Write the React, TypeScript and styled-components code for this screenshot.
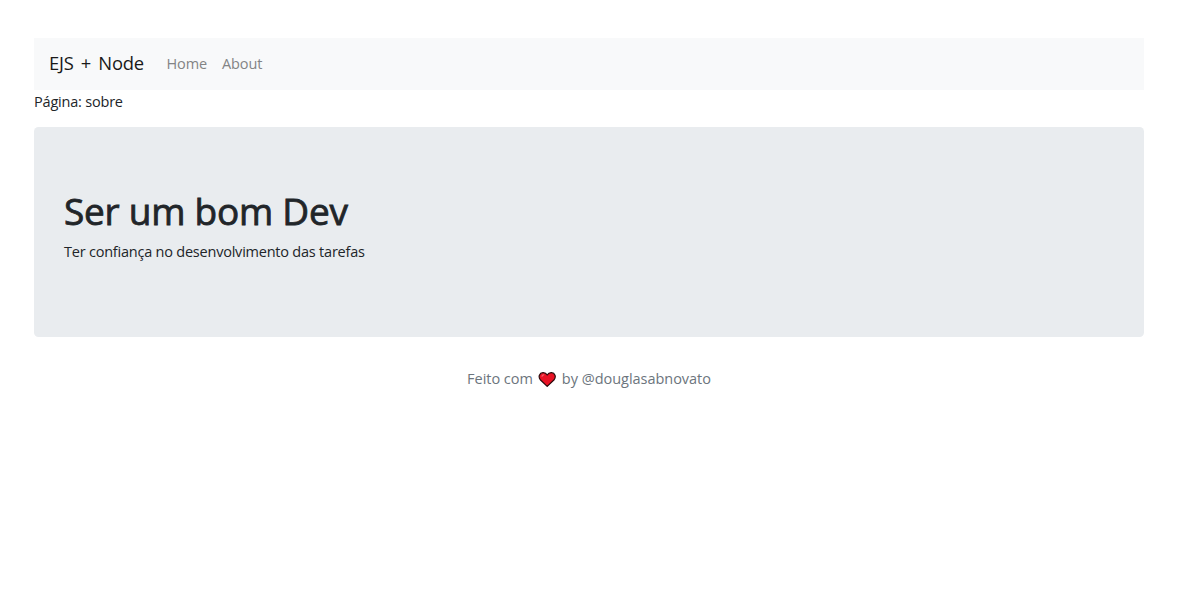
import React from "react";
import styled, { createGlobalStyle } from "styled-components";

const GlobalStyle = createGlobalStyle`
  *, *::before, *::after { box-sizing: border-box; }
  body {
    margin: 0;
    background: #fff;
    color: #212529;
    font-family: "Open Sans", "Noto Sans", sans-serif;
    font-size: 14.5px;
    font-weight: 400;
    line-height: 22.5px;
    letter-spacing: -0.22px;
  }
`;

const Page = styled.div`
  padding: 38px 54px 0 34px;
`;

const Navbar = styled.nav`
  display: flex;
  align-items: center;
  height: 52px;
  padding: 0 15px;
  background: #f8f9fa;
`;

const Brand = styled.a`
  width: 95px;
  margin-right: 22.5px;
  padding-bottom: 2px;
  color: #191919;
  font-size: 18.4px;
  letter-spacing: -0.2px;
  word-spacing: 2.6px;
  white-space: nowrap;
`;

const NavLinks = styled.div`
  display: flex;
  gap: 15px;
  color: #838485;
`;

const NavLink = styled.a<{ $width: number }>`
  width: ${(p) => p.$width}px;
  letter-spacing: -0.1px;
  white-space: nowrap;
`;

const PageLabel = styled.div`
  height: 37px;
  padding-top: 1px;
  letter-spacing: -0.2px;
`;

const Jumbotron = styled.section`
  height: 210px;
  padding: 61px 30px 60px;
  border-radius: 4.5px;
  background: #e9ecef;
`;

const Title = styled.h1`
  margin: 0 0 8px;
  font-size: 37px;
  font-weight: 400;
  line-height: 45px;
  letter-spacing: -0.25px;
  -webkit-text-stroke: 0.8px currentColor;
`;

const Lead = styled.p`
  margin: 0;
`;

const Footer = styled.footer`
  display: flex;
  align-items: center;
  justify-content: center;
  margin-top: 31px;
  color: #6c757d;
  letter-spacing: -0.03px;
`;

const Heart = styled.svg`
  margin: 0 5px;
`;

export default function App() {
  return (
    <>
      <GlobalStyle />
      <Page>
        <Navbar>
          <Brand>EJS + Node</Brand>
          <NavLinks>
            <NavLink $width={40.5}>Home</NavLink>
            <NavLink $width={41}>About</NavLink>
          </NavLinks>
        </Navbar>
        <PageLabel>Página: sobre</PageLabel>
        <Jumbotron>
          <Title>Ser um bom Dev</Title>
          <Lead>Ter confiança no desenvolvimento das tarefas</Lead>
        </Jumbotron>
        <Footer>
          <span>Feito com</span>
          <Heart width="19" height="17" viewBox="0 0 19 17">
            <path d="M9.200 15.400 2.500 9C-.2 5.900 1.500 1.900 4.900 1.700 6.800 1.600 8.300 2.500 9.200 4 10.100 2.500 11.600 1.600 13.500 1.700 16.900 1.900 18.600 5.900 15.900 9Z" fill="#e81224" stroke="#2a0a0c" strokeWidth="1.200" strokeLinejoin="round" />
            <path d="M4 5.300Q4.500 4 5.800 3.800" fill="none" stroke="#f4606b" strokeWidth="1.200" strokeLinecap="round" />
          </Heart>
          <span>by @douglasabnovato</span>
        </Footer>
      </Page>
    </>
  );
}
